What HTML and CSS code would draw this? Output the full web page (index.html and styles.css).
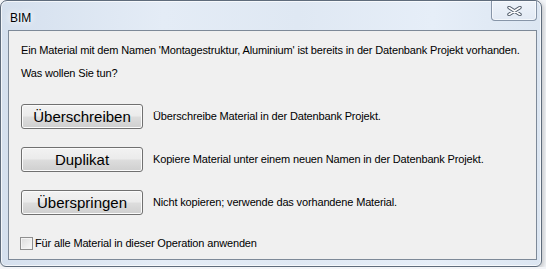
FILE: index.html
```html
<!DOCTYPE html>
<html lang="de">
<head>
    <meta charset="UTF-8">
    <title>BIM</title>
    <link rel="stylesheet" href="styles.css">
</head>
<body>
    <div class="window">
        <div class="title-bar">
            <span class="title">BIM</span>
            <button class="close-btn" aria-label="Schließen">
                <svg width="15" height="10" viewBox="0 0 15 10">
                    <path d="M2 1.5 L13 8.5 M13 1.5 L2 8.5" stroke="#4d5867" stroke-width="3.4" stroke-linecap="round"></path>
                    <path d="M2 1.5 L13 8.5 M13 1.5 L2 8.5" stroke="#ffffff" stroke-width="1.5" stroke-linecap="round"></path>
                </svg>
            </button>
        </div>
        <div class="client">
            <p class="message">Ein Material mit dem Namen 'Montagestruktur, Aluminium' ist bereits in der Datenbank Projekt vorhanden.</p>
            <p class="question">Was wollen Sie tun?</p>
            <div class="options">
                <div class="option">
                    <button class="win-btn">Überschreiben</button>
                    <span class="desc">Überschreibe Material in der Datenbank Projekt.</span>
                </div>
                <div class="option">
                    <button class="win-btn">Duplikat</button>
                    <span class="desc">Kopiere Material unter einem neuen Namen in der Datenbank Projekt.</span>
                </div>
                <div class="option">
                    <button class="win-btn">Überspringen</button>
                    <span class="desc">Nicht kopieren; verwende das vorhandene Material.</span>
                </div>
            </div>
            <label class="apply-all">
                <span class="checkbox"></span>
                Für alle Material in dieser Operation anwenden
            </label>
        </div>
    </div>
</body>
</html>
```

FILE: styles.css
```css
body {
    margin: 0;
    background-color: #f3f5f8;
    font-family: 'Liberation Sans', Arial, sans-serif;
    color: #000;
}

.window {
    width: 542px;
    height: 267px;
    box-sizing: border-box;
    display: flex;
    flex-direction: column;
    border: 1px solid #5f6c7c;
    border-radius: 7px 7px 6px 6px;
    background: linear-gradient(90deg, #d5e0ee 0%, #e4ecf6 30%, #dfe8f3 55%, #e6eef8 80%, #dce6f2 100%);
    box-shadow: inset 0 0 0 1px rgba(255, 255, 255, 0.7), 2px 2px 4px rgba(0, 0, 0, 0.18);
}

.title-bar {
    height: 29px;
    display: flex;
    align-items: flex-start;
}

.title {
    font-size: 12px;
    margin: 10px 0 0 9px;
    text-shadow: 0 0 6px #fff, 0 0 10px #fff;
}

.close-btn {
    margin: 0 4px 0 auto;
    width: 46px;
    height: 20px;
    padding: 0;
    display: flex;
    align-items: center;
    justify-content: center;
    border: 1px solid #8795a8;
    border-top: none;
    border-radius: 0 0 4px 4px;
    background: linear-gradient(#eef3fa, #e2eaf4);
    box-shadow: inset 0 0 0 1px rgba(255, 255, 255, 0.6);
}

.client {
    flex: 1;
    margin: 0 4px 6px 7px;
    padding: 13px 12px 0 12px;
    border: 1px solid #7d8998;
    background-color: #f0f0f0;
    font-size: 11px;
    letter-spacing: -0.15px;
    line-height: 13px;
}

.message, .question {
    margin: 0;
}

.question {
    margin-top: 10px;
}

.options {
    margin-top: 24px;
    display: flex;
    flex-direction: column;
    gap: 18px;
}

.option {
    display: flex;
    align-items: center;
    gap: 10px;
}

.win-btn {
    width: 122px;
    height: 25px;
    padding: 0 0 1px;
    font-family: 'Liberation Sans', Arial, sans-serif;
    font-size: 15px;
    letter-spacing: 0;
    color: #000;
    border: 1px solid #707070;
    border-radius: 3px;
    background: linear-gradient(#f2f2f2 0%, #ebebeb 48%, #dddddd 52%, #cfcfcf 100%);
    box-shadow: inset 0 0 0 1px #fbfbfb;
}

.apply-all {
    margin: 22px 0 0 -1px;
    display: flex;
    align-items: center;
    gap: 2px;
}

.checkbox {
    width: 13px;
    height: 13px;
    box-sizing: border-box;
    border: 1px solid #8f8f8f;
    background: linear-gradient(135deg, #dcdcdc, #fafafa);
    box-shadow: inset 0 0 0 1px #f4f4f4;
}
```
